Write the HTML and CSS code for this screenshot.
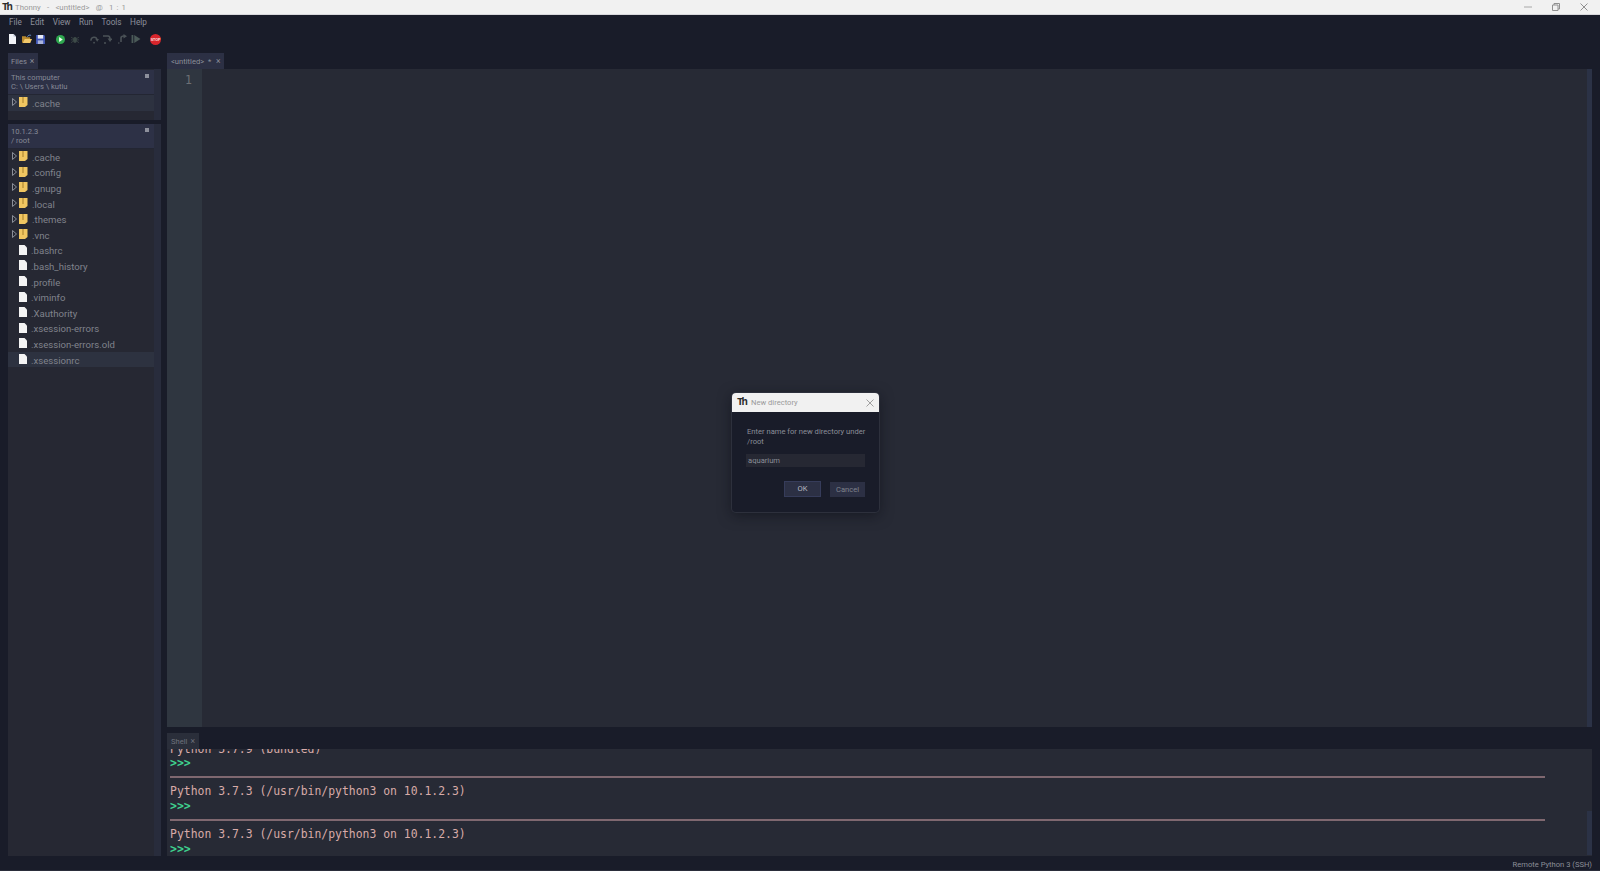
FILE: index.html
```html
<!DOCTYPE html>
<html lang="en">
<head>
<meta charset="utf-8">
<title>Thonny</title>
<link rel="stylesheet" href="styles.css">
</head>
<body>
<header class="titlebar">
  <span class="logo">Th</span>
  <span class="title">Thonny &nbsp;-&nbsp; &lt;untitled&gt; &nbsp;@&nbsp; 1 : 1</span>
  <div class="winbtns">
    <svg width="8" height="8" viewBox="0 0 8 8"><path d="M0 4h8" stroke="#a8a8a8"/></svg>
    <svg width="8" height="8" viewBox="0 0 8 8"><path d="M.5 2h5.500v5.500h-5.500zM2 2V.5h5.500V6H6" fill="none" stroke="#909090"/></svg>
    <svg width="8" height="8" viewBox="0 0 8 8"><path d="M.5.5l7 7M7.500.5l-7 7" stroke="#909090"/></svg>
  </div>
</header>
<nav class="menubar">
  <span>File</span><span>Edit</span><span>View</span><span>Run</span><span>Tools</span><span>Help</span>
</nav>
<div class="toolbar">
  <svg class="t-new" width="7" height="10" viewBox="0 0 7 10"><path d="M0 0h4.500L7 2.500V10H0z" fill="#f2f4f8"/><path d="M4.500 0v2.500H7" fill="#b9c2d4"/></svg>
  <svg class="t-open" width="10" height="10" viewBox="0 0 11 10"><path d="M0 2h4l1 1h4v6H0z" fill="#b98a2e"/><path d="M1 9l2-4h8l-2 4.500H1z" fill="#f2c86a"/><path d="M6 2.500C7 .5 8.500.5 10 1" fill="none" stroke="#6f9bd6"/></svg>
  <svg class="t-save" width="9" height="9" viewBox="0 0 10 10"><path d="M0 0h9l1 1v9H0z" fill="#3f55b5"/><path d="M2 0h6v4H2z" fill="#e8ecf6"/><path d="M2 6h6v4H2z" fill="#aab4dc"/></svg>
  <svg class="t-run" width="9" height="9" viewBox="0 0 10 10"><circle cx="5" cy="5" r="5" fill="#2fa84f"/><path d="M3.500 2.200l4 2.800-4 2.800z" fill="#f2fff4"/></svg>
  <svg class="t-bug" width="8" height="9" viewBox="0 0 10 10"><ellipse cx="5" cy="5.500" rx="2.500" ry="3.500" fill="#3d4a48"/><path d="M0 2l3 2M10 2L7 4M0 5.500h3M10 5.500H7M0 9l3-2M10 9L7 7" stroke="#3d4a48"/></svg>
  <svg class="t-over" width="9" height="9" viewBox="0 0 10 9"><path d="M1 6C1 1 7 .5 8 5" fill="none" stroke="#4b5257" stroke-width="1.600"/><path d="M6 4h4L8 7z" fill="#4b5257"/><circle cx="4.500" cy="8" r="1" fill="#4b5257"/></svg>
  <svg class="t-into" width="9" height="9" viewBox="0 0 9 9"><path d="M0 1h5c1.500 0 2 1 2 3" fill="none" stroke="#4b5257" stroke-width="1.600"/><path d="M4.500 3.500h5L7 7z" fill="#4b5257"/><circle cx="2" cy="8" r="1" fill="#4b5257"/></svg>
  <svg class="t-out" width="9" height="10" viewBox="0 0 9 10"><path d="M3 8V4c0-1.500 1-2 3-2" fill="none" stroke="#4b5257" stroke-width="1.600"/><path d="M5.500 0L9 2.200 5.500 4.500z" fill="#4b5257"/><circle cx="0.800" cy="9" r="0.800" fill="#4b5257"/></svg>
  <svg class="t-resume" width="10" height="8" viewBox="0 0 10 9"><path d="M0 0h2v9H0z" fill="#4b5a58"/><path d="M3 0l7 4.500L3 9z" fill="#4b5a58"/></svg>
  <svg class="t-stop" width="11" height="11" viewBox="0 0 11 11"><circle cx="5.500" cy="5.500" r="5.500" fill="#d8252c"/><text x="5.500" y="6.800" text-anchor="middle" class="stop-label">STOP</text></svg>
</div>

<main class="workspace">
  <aside class="sidebar">
    <div class="tabs"><div class="tab">Files <i class="tab-x">×</i></div></div>
    <section class="panel panel-local">
      <div class="panel-body">
        <div class="panel-head">
          <div>This computer</div>
          <div>C: \ Users \ kutlu</div>
          <b class="pin"></b>
        </div>
        <div class="row selected">
          <svg class="tri" width="5" height="8" viewBox="0 0 5 8"><path d="M.5.500l4 3.500-4 3.500z" fill="none" stroke="#8a8e98"/></svg>
          <svg class="ico" width="9" height="10" viewBox="0 0 9 10"><path d="M0 0h8.500v8L6 10H0z" fill="#f0c661"/><path d="M4 0v6" stroke="#a67f2b"/></svg>
          <span>.cache</span>
        </div>
      </div>
      <div class="panel-scroll"></div>
    </section>
    <section class="panel panel-remote">
      <div class="panel-body">
        <div class="panel-head">
          <div>10.1.2.3</div>
          <div>/ root</div>
          <b class="pin"></b>
        </div>
        <div class="row"><svg class="tri" width="5" height="8" viewBox="0 0 5 8"><path d="M.5.500l4 3.500-4 3.500z" fill="none" stroke="#8a8e98"/></svg><svg class="ico" width="9" height="10" viewBox="0 0 9 10"><path d="M0 0h8.500v8L6 10H0z" fill="#f0c661"/><path d="M4 0v6" stroke="#a67f2b"/></svg><span>.cache</span></div>
        <div class="row"><svg class="tri" width="5" height="8" viewBox="0 0 5 8"><path d="M.5.500l4 3.500-4 3.500z" fill="none" stroke="#8a8e98"/></svg><svg class="ico" width="9" height="10" viewBox="0 0 9 10"><path d="M0 0h8.500v8L6 10H0z" fill="#f0c661"/><path d="M4 0v6" stroke="#a67f2b"/></svg><span>.config</span></div>
        <div class="row"><svg class="tri" width="5" height="8" viewBox="0 0 5 8"><path d="M.5.500l4 3.500-4 3.500z" fill="none" stroke="#8a8e98"/></svg><svg class="ico" width="9" height="10" viewBox="0 0 9 10"><path d="M0 0h8.500v8L6 10H0z" fill="#f0c661"/><path d="M4 0v6" stroke="#a67f2b"/></svg><span>.gnupg</span></div>
        <div class="row"><svg class="tri" width="5" height="8" viewBox="0 0 5 8"><path d="M.5.500l4 3.500-4 3.500z" fill="none" stroke="#8a8e98"/></svg><svg class="ico" width="9" height="10" viewBox="0 0 9 10"><path d="M0 0h8.500v8L6 10H0z" fill="#f0c661"/><path d="M4 0v6" stroke="#a67f2b"/></svg><span>.local</span></div>
        <div class="row"><svg class="tri" width="5" height="8" viewBox="0 0 5 8"><path d="M.5.500l4 3.500-4 3.500z" fill="none" stroke="#8a8e98"/></svg><svg class="ico" width="9" height="10" viewBox="0 0 9 10"><path d="M0 0h8.500v8L6 10H0z" fill="#f0c661"/><path d="M4 0v6" stroke="#a67f2b"/></svg><span>.themes</span></div>
        <div class="row"><svg class="tri" width="5" height="8" viewBox="0 0 5 8"><path d="M.5.500l4 3.500-4 3.500z" fill="none" stroke="#8a8e98"/></svg><svg class="ico" width="9" height="10" viewBox="0 0 9 10"><path d="M0 0h8.500v8L6 10H0z" fill="#f0c661"/><path d="M4 0v6" stroke="#a67f2b"/></svg><span>.vnc</span></div>
        <div class="row file"><svg class="ico" width="8" height="10" viewBox="0 0 8 10"><path d="M0 0h5.500L8 2.500V10H0z" fill="#f4f4f4"/></svg><span>.bashrc</span></div>
        <div class="row file"><svg class="ico" width="8" height="10" viewBox="0 0 8 10"><path d="M0 0h5.500L8 2.500V10H0z" fill="#f4f4f4"/></svg><span>.bash_history</span></div>
        <div class="row file"><svg class="ico" width="8" height="10" viewBox="0 0 8 10"><path d="M0 0h5.500L8 2.500V10H0z" fill="#f4f4f4"/></svg><span>.profile</span></div>
        <div class="row file"><svg class="ico" width="8" height="10" viewBox="0 0 8 10"><path d="M0 0h5.500L8 2.500V10H0z" fill="#f4f4f4"/></svg><span>.viminfo</span></div>
        <div class="row file"><svg class="ico" width="8" height="10" viewBox="0 0 8 10"><path d="M0 0h5.500L8 2.500V10H0z" fill="#f4f4f4"/></svg><span>.Xauthority</span></div>
        <div class="row file"><svg class="ico" width="8" height="10" viewBox="0 0 8 10"><path d="M0 0h5.500L8 2.500V10H0z" fill="#f4f4f4"/></svg><span>.xsession-errors</span></div>
        <div class="row file"><svg class="ico" width="8" height="10" viewBox="0 0 8 10"><path d="M0 0h5.500L8 2.500V10H0z" fill="#f4f4f4"/></svg><span>.xsession-errors.old</span></div>
        <div class="row file selected"><svg class="ico" width="8" height="10" viewBox="0 0 8 10"><path d="M0 0h5.500L8 2.500V10H0z" fill="#f4f4f4"/></svg><span>.xsessionrc</span></div>
      </div>
      <div class="panel-scroll"></div>
    </section>
  </aside>

  <div class="center">
    <div class="tabs"><div class="tab tab-editor">&lt;untitled&gt;  * <i class="tab-x">×</i></div></div>
    <section class="editor">
      <div class="gutter">1</div>
      <div class="code"></div>
      <div class="ed-scroll"></div>
    </section>
    <div class="tabs tabs-shell"><div class="tab tab-shell">Shell <i class="tab-x">×</i></div></div>
    <section class="shell">
      <div class="shell-lines">
        <div class="sh-line">Python 3.7.9 (bundled)</div>
        <div class="sh-line prompt">&gt;&gt;&gt;</div>
        <div class="sh-rule"></div>
        <div class="sh-line">Python 3.7.3 (/usr/bin/python3 on 10.1.2.3)</div>
        <div class="sh-line prompt">&gt;&gt;&gt;</div>
        <div class="sh-rule"></div>
        <div class="sh-line">Python 3.7.3 (/usr/bin/python3 on 10.1.2.3)</div>
        <div class="sh-line prompt">&gt;&gt;&gt;</div>
      </div>
      <div class="sh-scroll"></div>
    </section>
  </div>
</main>

<footer class="statusbar">Remote Python 3 (SSH)</footer>

<div class="dialog">
  <div class="dlg-title">
    <span class="logo">Th</span>
    <span class="dlg-name">New directory</span>
    <svg class="dlg-close" width="8" height="8" viewBox="0 0 8 8"><path d="M.5.500l7 7M7.500.500l-7 7" stroke="#a0a0a0"/></svg>
  </div>
  <div class="dlg-body">
    <p class="dlg-msg">Enter name for new directory under<br>/root</p>
    <div class="dlg-input">aquarium</div>
    <div class="dlg-btns">
      <div class="btn btn-ok">OK</div>
      <div class="btn">Cancel</div>
    </div>
  </div>
</div>
</body>
</html>
```

FILE: styles.css
```css
* { box-sizing: border-box; }
html, body { height: 100%; }
body {
  margin: 0;
  height: 871px;
  overflow: hidden;
  display: flex;
  flex-direction: column;
  background: #191c29;
  color: #8b8e98;
  font-family: Roboto, "Open Sans", sans-serif;
  font-size: 7.600px;
}
.titlebar {
  height: 15px;
  flex: none;
  display: flex;
  align-items: center;
  background: #f1f1f1;
  border-bottom: 1px solid #d8d8dc;
  padding-left: 2px;
  color: #9a9a9a;
}
.logo {
  font-family: "Liberation Mono", monospace;
  font-weight: 700;
  font-size: 10.500px;
  letter-spacing: -1.800px;
  color: #2c2c2c;
  width: 10px;
  line-height: 11px;
}
.title { margin-left: 3px; font-size: 7.800px; word-spacing: 1.200px; }
.winbtns {
  margin-left: auto;
  display: flex;
  gap: 20px;
  padding-right: 12px;
  align-items: center;
}
.menubar {
  height: 14px;
  flex: none;
  display: flex;
  align-items: center;
  padding-left: 9px;
  gap: 8.500px;
  color: #8d909c;
  font-size: 8.200px;
}
.toolbar {
  height: 20px;
  margin-bottom: 4px;
  flex: none;
  display: flex;
  align-items: center;
  padding-left: 9px;
}
.t-open { margin-left: 6px; }
.t-save { margin-left: 4px; }
.t-run { margin-left: 11px; }
.t-bug { margin-left: 6px; }
.t-over { margin-left: 11px; }
.t-into { margin-left: 4px; }
.t-out { margin-left: 6px; }
.t-resume { margin-left: 4px; }
.t-stop { margin-left: 9px; }
.stop-label { font-family: "Liberation Sans", sans-serif; font-size: 3.600px; font-weight: 700; fill: #fbe4e4; }
.workspace {
  flex: 1;
  min-height: 0;
  display: grid;
  grid-template-columns: 153px 1fr;
  column-gap: 6px;
  padding: 0 8px;
}
.sidebar, .center { display: flex; flex-direction: column; min-height: 0; }
.tabs { height: 16px; flex: none; display: flex; }
.tab {
  background: #2c3044;
  padding: 0 3px;
  display: flex;
  align-items: center;
  gap: 3px;
  width: 30px;
  font-size: 7.600px;
  color: #8b8e98;
}
.tab-editor { width: 57px; white-space: pre; gap: 0; padding-left: 4px; }
.tab-editor .tab-x { margin-left: 3px; }
.tab-shell { width: 32px; background: #2a2e3a; color: #6f727c; padding-left: 4px; }
.tab-x { font-style: normal; font-size: 8.500px; line-height: 1; }
.panel { display: flex; background: #262833; }
.panel-local { height: 51px; flex: none; margin-bottom: 4px; }
.panel-remote { flex: 1; }
.panel-body { flex: 1; min-width: 0; }
.panel-scroll { width: 7px; flex: none; background: #282c3c; }
.panel-head {
  position: relative;
  height: 25px;
  margin-top: 1px;
  padding: 2.500px 3px 0;
  background: #2d3146;
  line-height: 9.500px;
  font-size: 7.600px;
  color: #868a96;
  border-bottom: 1px solid #232633;
}
.panel-remote .panel-head { margin-top: 0; }
.pin {
  position: absolute;
  right: 5px;
  top: 4px;
  width: 4px;
  height: 4px;
  background: #8d909c;
}
.row {
  height: 15.600px;
  display: flex;
  align-items: center;
  padding-left: 4px;
  font-size: 9.600px;
  color: #80838c;
}
.row span { margin: 1px 0 0 4px; }
.row .tri { margin-top: -1px; }
.row .ico { margin-left: 2px; margin-top: -1px; }
.row.file { padding-left: 11px; }
.row.file .ico { margin-left: 0; }
.row.file span { margin-left: 4px; }
.row.selected { background: #2d3240; }
.center { min-width: 0; }
.editor { flex: 1; min-height: 0; display: flex; background: #272a35; }
.gutter {
  width: 35px;
  flex: none;
  background: #2f3640;
  padding: 4px 10px 0 0;
  text-align: right;
  font-family: "DejaVu Sans Mono", monospace;
  font-size: 11.500px;
  line-height: 15px;
  color: #6d7075;
}
.code { flex: 1; }
.ed-scroll { width: 5px; flex: none; background: #2b3246; }
.tabs-shell { margin-top: 6px; }
.shell {
  height: 107px;
  flex: none;
  display: flex;
  background: #272a35;
  overflow: hidden;
}
.shell-lines {
  flex: 1;
  min-width: 0;
  display: flex;
  flex-direction: column;
  justify-content: flex-end;
  padding: 0 42px 0 3px;
  font-family: "DejaVu Sans Mono", monospace;
  font-size: 11.430px;
  color: #d8aba8;
}
.sh-line { height: 14.400px; line-height: 14.400px; flex: none; white-space: pre; }
.prompt { color: #3fcf8e; font-weight: 700; }
.sh-rule { height: 2px; margin: 6px 0; background: #7f6870; flex: none; }
.sh-scroll { width: 5px; height: 44px; align-self: flex-end; margin-bottom: 1px; background: #2b3246; flex: none; }
.statusbar {
  height: 15px;
  flex: none;
  text-align: right;
  padding-right: 8px;
  line-height: 17px;
  font-size: 7.600px;
  color: #8b8e98;
  border-bottom: 1px solid #2a2d3a;
}
.dialog {
  position: absolute;
  left: 732px;
  top: 393px;
  width: 147px;
  height: 119px;
  border-radius: 4px;
  overflow: hidden;
  background: #191c29;
  box-shadow: 0 0 0 1px #2d303c, 0 3px 14px rgba(10, 11, 18, .55);
  font-size: 7.600px;
  color: #8b8e98;
}
.dlg-title {
  height: 19px;
  display: flex;
  align-items: center;
  background: #f1f1f1;
  padding-left: 5px;
  color: #9a9a9a;
}
.dlg-name { margin-left: 4px; }
.dlg-close { margin-left: auto; margin-right: 5px; }
.dlg-body { padding: 15px 14px 0; }
.dlg-msg { margin: 0; line-height: 9.500px; padding-left: 1px; white-space: nowrap; }
.dlg-input {
  height: 13px;
  margin-top: 8px;
  background: #262833;
  padding-left: 2px;
  line-height: 13px;
  color: #8b8e98;
}
.dlg-btns { display: flex; justify-content: flex-end; align-items: center; gap: 9px; margin-top: 14px; }
.btn {
  width: 35px;
  height: 15px;
  background: #2c3044;
  text-align: center;
  line-height: 15px;
  color: #7f828c;
}
.btn-ok {
  width: 37px;
  height: 16px;
  line-height: 14px;
  border: 1px solid #363c5a;
  color: #b5b7c0;
}
```
